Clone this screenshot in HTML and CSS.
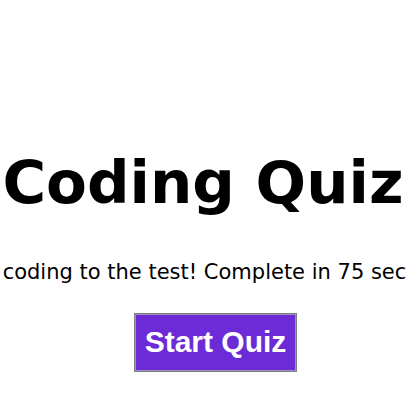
FILE: index.html
```html
<!DOCTYPE html>
<html>
<head>
<meta charset="utf-8">
<link rel="stylesheet" href="styles.css">
</head>
<body>
<main class="start">
  <h1 class="title">Coding Quiz</h1>
  <p class="intro">Put your coding to the test! Complete in 75 seconds flat</p>
  <button class="start-btn">Start Quiz</button>
</main>
</body>
</html>
```
FILE: styles.css
```css
html, body {
  margin: 0;
  padding: 0;
  background: #ffffff;
}
.start {
  display: flex;
  flex-direction: column;
  align-items: center;
  padding-top: 148px;
  font-family: "DejaVu Sans", sans-serif;
  color: #000000;
}
.title {
  font-size: 59.5px;
  font-weight: bold;
  margin: 0;
  white-space: nowrap;
  line-height: normal;
}
.intro {
  font-size: 21px;
  line-height: normal;
  margin: 43px 0 0;
  white-space: nowrap;
}
.start-btn {
  margin: 29px 0 0 25px;
  font-family: "Liberation Sans", Arial, sans-serif;
  font-weight: bold;
  font-size: 30px;
  line-height: normal;
  color: #ffffff;
  background: #6c2bd7;
  border: 1px solid #7d7d7d;
  box-shadow: inset 0 0 0 1px #a08fc0;
  padding: 11px 10px 12px;
}
```
